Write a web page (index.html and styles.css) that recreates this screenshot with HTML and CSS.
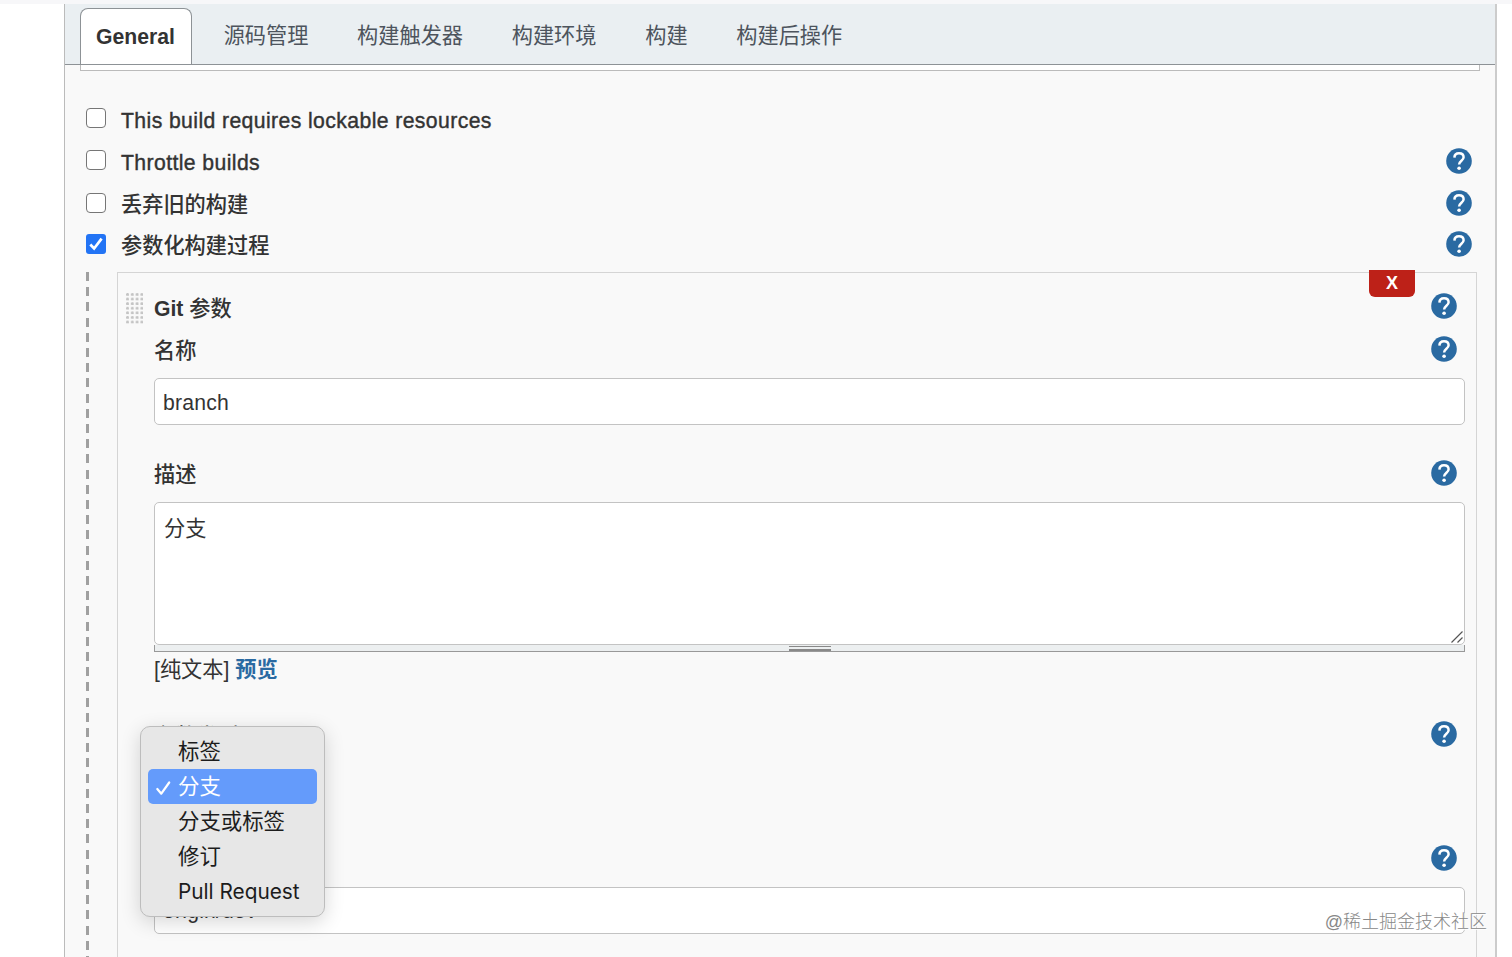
FILE: index.html
```
<!DOCTYPE html>
<html lang="zh-CN">
  <head>
    <meta charset="UTF-8" />
    <meta name="viewport" content="width=device-width, initial-scale=1.0" />
    <title>General</title>
    <link rel="stylesheet" href="styles.css">
  </head>
  <body>
    <!-- Shared help icon -->
    <svg class="symbols">
      <symbol id="help" viewBox="0 0 26 26">
        <circle cx="13" cy="13" r="12.8" fill="#2a6aa2" />
        <path d="M8.400 9.600C8.500 6.800 10.400 5.300 13 5.300c2.700 0 4.600 1.500 4.600 3.900 0 3.400-4.500 3.700-4.500 7.400" fill="none" stroke="#fff" stroke-width="2.500" />
        <circle cx="13.100" cy="20.200" r="1.800" fill="#fff" />
      </symbol>
    </svg>

    <div class="config">
      <div class="tabs">
        <a class="tab active">General</a>
        <a class="tab">源码管理</a>
        <a class="tab">构建触发器</a>
        <a class="tab">构建环境</a>
        <a class="tab">构建</a>
        <a class="tab">构建后操作</a>
      </div>

      <div class="description-end"></div>

      <div class="options">
        <div class="option">
          <span class="checkbox"></span>
          <span class="latin">This build requires lockable resources</span>
        </div>
        <div class="option">
          <span class="checkbox"></span>
          <span class="latin">Throttle builds</span>
          <svg class="help"><use href="#help" /></svg>
        </div>
        <div class="option">
          <span class="checkbox"></span>
          <span class="label">丢弃旧的构建</span>
          <svg class="help"><use href="#help" /></svg>
        </div>
        <div class="option last">
          <span class="checkbox checked">
            <svg viewBox="0 0 20 20"><path d="M4.300 10.500l3.800 4L15.600 4.600" fill="none" stroke="#fff" stroke-width="2.700" /></svg>
          </span>
          <span class="label">参数化构建过程</span>
          <svg class="help"><use href="#help" /></svg>
        </div>
      </div>

      <div class="nested">
        <div class="dashes"></div>
        <div class="parameter">
          <span class="delete">X</span>
          <div class="row title">
            <span class="handle"></span>
            <b>Git <span>参数</span></b>
            <svg class="help"><use href="#help" /></svg>
          </div>

          <div class="row">
            <span>名称</span>
            <svg class="help"><use href="#help" /></svg>
          </div>
          <div class="input">branch</div>

          <div class="row">
            <span>描述</span>
            <svg class="help"><use href="#help" /></svg>
          </div>
          <div class="textarea">
            分支
            <svg class="grip" viewBox="0 0 12 12"><path d="M.5 11.500L11.500.5M6.500 11.500l5-5" stroke="#555" stroke-width="1.200" /></svg>
          </div>
          <div class="resizer"><span></span></div>
          <div class="preview">[纯文本] <a>预览</a></div>

          <div class="row">
            <span class="type">参数类型</span>
            <svg class="help"><use href="#help" /></svg>
          </div>
          <div class="select-area">
            <div class="menu">
              <div class="item">标签</div>
              <div class="item selected">
                <svg class="tick" viewBox="0 0 16 16"><path d="M1.800 9l4 4.700L13.700 2.500" fill="none" stroke="#fff" stroke-width="2.200" stroke-linecap="round" stroke-linejoin="round" /></svg>
                分支
              </div>
              <div class="item">分支或标签</div>
              <div class="item">修订</div>
              <div class="item pull">Pull Request</div>
            </div>
          </div>

          <div class="row">
            <svg class="help"><use href="#help" /></svg>
          </div>
          <div class="input default">origin/dev</div>
        </div>
      </div>
    </div>

    <div class="watermark">@稀土掘金技术社区</div>
  </body>
</html>
```

FILE: styles.css
```
* {
  box-sizing: border-box;
}
body {
  margin: 0;
  height: 957px;
  overflow: hidden;
  background: #fff;
  border-top: 4px solid #f7f7f9;
  font-family: "Liberation Sans", "Noto Sans CJK SC", sans-serif;
  font-size: 21.2px;
  color: #333;
}
.symbols {
  display: none;
}
.config {
  width: 1433px;
  height: 953px;
  margin-left: 64px;
  background: #f9f9f9;
  border-left: 1.500px solid #bbb;
  border-right: 2px solid #ccc;
  overflow: hidden;
}

/* Tabs */
.tabs {
  display: flex;
  height: 61px;
  padding: 4px 0 0 15px;
  background: #eaeff2;
  border-bottom: 1px solid #8d9296;
}
.tab {
  padding: 0 24.350px;
  line-height: 55px;
  color: #4d545d;
}
.tab.active {
  padding: 0 15px;
  width: 112px;
  margin-right: 7.300px;
  line-height: 55px;
  font-weight: bold;
  color: #333;
  background: #fff;
  border: 1px solid #8d9296;
  border-bottom: 0;
  border-radius: 8px 8px 0 0;
}
.description-end {
  height: 6px;
  margin: 0 15px;
  background: #fff;
  border: 1px solid #bbb;
  border-top: 0;
}

/* Checkbox options */
.options {
  padding: 28px 23px 0 21px;
  font-weight: 500;
}
.option {
  display: flex;
  align-items: center;
  height: 42.300px;
}
.option.last {
  height: 40.500px;
}
.label {
  margin-top: -4px;
}
.last .label,
.last .help {
  margin-top: -5px;
}
.latin {
  margin-top: 1px;
  font-weight: 400;
  letter-spacing: 0.400px;
  -webkit-text-stroke: 0.400px #333;
}
.checkbox {
  width: 20px;
  height: 20px;
  margin: -4px 15px 0 0;
  background: #fff;
  border: 1.500px solid #767676;
  border-radius: 4px;
}
.checkbox.checked {
  background: #2374f5;
  border: 0;
  border-radius: 3px;
}
.checkbox svg {
  display: block;
}
.help {
  width: 26px;
  height: 26px;
  margin: -3px 0 0 auto;
  flex: none;
}

/* Parameter block */
.nested {
  display: flex;
  margin: 6px 18px 0 21px;
}
.dashes {
  width: 3px;
  margin-right: 28px;
  background: repeating-linear-gradient(#a0a0a0 0 9px, transparent 9px 15.200px);
}
.parameter {
  position: relative;
  flex: 1;
  height: 760px;
  padding: 13px 11px 0 36px;
  border: 1px solid #d5d5d5;
}
.delete {
  position: absolute;
  top: -3px;
  right: 61px;
  width: 46px;
  height: 27px;
  line-height: 27px;
  text-align: center;
  font-size: 18px;
  font-weight: bold;
  color: #fff;
  background: #bd2118;
  border-radius: 0 0 6px 6px;
}
.row {
  display: flex;
  align-items: center;
  height: 43px;
  padding: 0 8px 3px 0;
  font-weight: 500;
}
.row .help {
  margin-top: -1px;
}
.row > span {
  margin-top: -1px;
}
.row .type {
  margin-top: 1px;
}
.title {
  margin-left: -28px;
}
.title b {
  margin-top: 1px;
}
.title b span {
  font-weight: 500;
}
.title .handle {
  width: 17px;
  height: 31px;
  margin: 4px 11px 0 0;
  background: radial-gradient(circle at 1.500px 1.500px, #c4c4c4 1.200px, transparent 1.700px) 0 0 / 4.800px 4.600px;
}
.input {
  height: 47px;
  margin: 6px 0 28px;
  padding: 0 8px;
  line-height: 47px;
  letter-spacing: 0.200px;
  background: #fff;
  border: 1.500px solid #c3c3c3;
  border-radius: 5px;
}
.input.default {
  line-height: 46px;
}
.textarea {
  position: relative;
  height: 143px;
  margin-top: 6px;
  padding: 8px 9px;
  background: #fff;
  border: 1.500px solid #c3c3c3;
  border-radius: 5px;
}
.grip {
  position: absolute;
  right: 1px;
  bottom: 1px;
  width: 12px;
  height: 12px;
}
.resizer {
  height: 7px;
  padding-top: 1px;
  background: #eceff0;
  border: 1px solid #999;
  border-top: 0;
  border-bottom-width: 1.500px;
}
.resizer span {
  display: block;
  width: 42px;
  height: 5px;
  margin: 0 auto;
  border: solid #888;
  border-width: 1px 0 2px;
}
.preview {
  height: 62px;
  line-height: 35px;
}
.preview a {
  color: #2a6aa2;
  font-weight: bold;
}

/* Open select list */
.select-area {
  position: relative;
  height: 81px;
}
.menu {
  position: absolute;
  top: -31px;
  left: -14px;
  width: 185px;
  height: 191px;
  padding: 7px;
  background: #e7e7e7;
  border: 1px solid #bdbdbd;
  border-radius: 10px;
  box-shadow: 0 5px 20px rgba(0, 0, 0, 0.160);
  color: #1c1c1c;
  font-size: 21.400px;
  font-weight: 400;
}
.item {
  position: relative;
  height: 35px;
  padding-left: 30px;
  line-height: 37px;
  border-radius: 5px;
}
.selected {
  color: #fff;
  background: #649bfb;
}
.tick {
  position: absolute;
  left: 7px;
  top: 11px;
  width: 17px;
  height: 16px;
}
.pull {
  font-family: Inter, sans-serif;
  font-size: 20.800px;
  line-height: 36px;
}

.watermark {
  position: absolute;
  right: 25px;
  bottom: 21px;
  font-size: 18px;
  line-height: 27px;
  font-weight: 300;
  color: #888;
  text-shadow: 1px 1px 0 #fff;
}
```
